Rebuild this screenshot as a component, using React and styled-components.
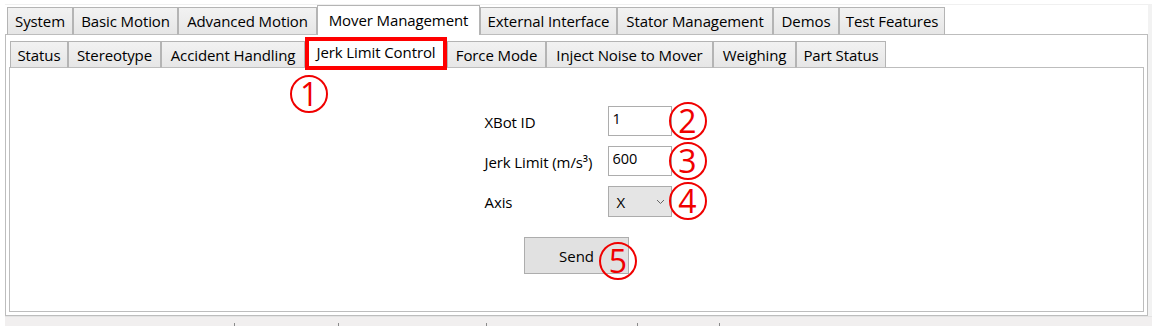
import React from 'react';
import styled, { createGlobalStyle } from 'styled-components';

const GlobalStyle = createGlobalStyle`
  html, body {
    margin: 0;
    padding: 0;
    background: #ffffff;
  }
  body {
    font-family: "Open Sans", "Noto Sans", "Liberation Sans", sans-serif;
    color: #000000;
  }
`;

const outerTabs = [
  { label: 'System', width: 66 },
  { label: 'Basic Motion', width: 105 },
  { label: 'Advanced Motion', width: 139 },
  { label: 'Mover Management', width: 163, active: true },
  { label: 'External Interface', width: 137 },
  { label: 'Stator Management', width: 156 },
  { label: 'Demos', width: 66 },
  { label: 'Test Features', width: 106 },
];

const innerTabs = [
  { label: 'Status', width: 58 },
  { label: 'Stereotype', width: 93 },
  { label: 'Accident Handling', width: 144 },
  { label: 'Jerk Limit Control', width: 142, active: true },
  { label: 'Force Mode', width: 99 },
  { label: 'Inject Noise to Mover', width: 167 },
  { label: 'Weighing', width: 83 },
  { label: 'Part Status', width: 90 },
];

const bottomTicks = [229, 333, 481, 632, 714];

const Page = styled.div`
  width: 1158px;
  height: 326px;
  overflow: hidden;
  padding: 4px 0 0 5px;
  box-sizing: border-box;
  background: #ffffff;
`;

const Shell = styled.div`
  width: 1147px;
  box-sizing: border-box;
  border-top: 1px solid #f0f0f0;
  border-right: 4px solid #f2f2f2;
`;

const TabStrip = styled.div`
  display: flex;
  align-items: flex-end;
  height: ${(p) => p.$height}px;
  padding-left: ${(p) => p.$indent}px;
  margin-bottom: -1px;
  position: relative;
  z-index: 1;
`;

const Tab = styled.div`
  position: relative;
  box-sizing: border-box;
  width: ${(p) => p.$width}px;
  height: ${(p) => (p.$active ? p.$tall : p.$short)}px;
  display: flex;
  align-items: center;
  justify-content: center;
  padding-bottom: ${(p) => (p.$active ? 2 : 0)}px;
  font-size: 15px;
  letter-spacing: -0.1px;
  white-space: nowrap;
  border: 1px solid #b4b4b4;
  border-bottom: ${(p) => (p.$active ? 'none' : '1px solid #bdbdbd')};
  background: ${(p) =>
    p.$active ? '#ffffff' : 'linear-gradient(#f2f2f2, #e6e6e6)'};
  color: #000000;
`;

const Panel = styled.div`
  box-sizing: border-box;
  height: ${(p) => p.$height}px;
  border: 1px solid #bdbdbd;
  padding: ${(p) => p.$pad};
  background: #ffffff;
  display: flex;
  flex-direction: column;
`;

const Content = styled.div`
  display: flex;
  flex-direction: column;
  align-items: center;
  padding-top: 38px;
`;

const Form = styled.div`
  display: grid;
  grid-template-columns: 123px 64px;
  grid-auto-rows: 30px;
  row-gap: 10px;
  align-items: center;
  margin-left: 3px;
`;

const Label = styled.span`
  font-size: 15px;
  letter-spacing: -0.1px;
  padding-top: 2px;
`;

const Field = styled.div`
  position: relative;
  height: 30px;
`;

const TextBox = styled.input`
  box-sizing: border-box;
  width: 64px;
  height: 30px;
  margin: 0;
  padding: 0 0 6px 4px;
  border: 1px solid #adadad;
  font-family: inherit;
  font-size: 14.5px;
  color: #000000;
  background: #ffffff;
  outline: none;
`;

const Combo = styled.div`
  box-sizing: border-box;
  width: 64px;
  height: 31px;
  display: flex;
  align-items: center;
  justify-content: space-between;
  padding: 0 6px 0 8px;
  border: 1px solid #acacac;
  background: #e5e5e5;
  font-size: 15px;
`;

const Button = styled.div`
  position: relative;
  box-sizing: border-box;
  width: 105px;
  height: 37px;
  margin-top: 21px;
  display: flex;
  align-items: center;
  justify-content: center;
  border: 1px solid #adadad;
  background: #e1e1e1;
  font-size: 15px;
`;

const Marker = styled.span`
  position: absolute;
  left: ${(p) => p.$left}px;
  top: ${(p) => p.$top}px;
  width: 38px;
  height: 38px;
  box-sizing: border-box;
  border: 2px solid #f00000;
  border-radius: 50%;
  display: flex;
  align-items: center;
  justify-content: center;
  color: #f00000;
  font-family: "Open Sans", "Noto Sans", sans-serif;
  font-size: 32px;
  line-height: 1;
  padding-bottom: 1px;
  z-index: 3;
`;

const Highlight = styled.span`
  position: absolute;
  left: -1px;
  top: -1px;
  right: -1px;
  bottom: -2px;
  border: 4px solid #ff0000;
  pointer-events: none;
`;

const BottomStrip = styled.div`
  position: relative;
  width: 1147px;
  height: 11px;
  border-top: 1px solid #e4e4e4;
  background: #f1efef;
`;

const Tick = styled.span`
  position: absolute;
  bottom: 0;
  left: ${(p) => p.$left}px;
  width: 1px;
  height: 5px;
  background: #8a8a8a;
`;

const Chevron = () => (
  <svg width="9" height="6" viewBox="0 0 9 6">
    <path d="M1 1l3.5 3.5L8 1" fill="none" stroke="#666" strokeWidth="1" />
  </svg>
);

const FormRow = ({ label, marker, children }) => (
  <>
    <Label>{label}</Label>
    <Field>
      {children}
      <Marker $left={61} $top={-4}>{marker}</Marker>
    </Field>
  </>
);

export default function App() {
  return (
    <>
      <GlobalStyle />
      <Page>
        <Shell>
          <TabStrip $height={30} $indent={2}>
            {outerTabs.map((t) => (
              <Tab
                key={t.label}
                $width={t.width}
                $active={t.active}
                $tall={30}
                $short={28}
              >
                {t.label}
              </Tab>
            ))}
          </TabStrip>
          <Panel $height={282} $pad="2px 3px 3px 3px">
            <TabStrip $height={31} $indent={1}>
              {innerTabs.map((t) => (
                <Tab
                  key={t.label}
                  $width={t.width}
                  $active={t.active}
                  $tall={31}
                  $short={27}
                >
                  {t.label}
                  {t.active && (
                    <>
                      <Highlight />
                      <Marker $left={-16} $top={37}>1</Marker>
                    </>
                  )}
                </Tab>
              ))}
            </TabStrip>
            <Panel $height={245} $pad="0">
              <Content>
                <Form>
                  <FormRow label="XBot ID" marker="2">
                    <TextBox readOnly value="1" />
                  </FormRow>
                  <FormRow label="Jerk Limit (m/s³)" marker="3">
                    <TextBox readOnly value="600" />
                  </FormRow>
                  <FormRow label="Axis" marker="4">
                    <Combo>
                      <span>X</span>
                      <Chevron />
                    </Combo>
                  </FormRow>
                </Form>
                <Button>
                  Send
                  <Marker $left={74} $top={4}>5</Marker>
                </Button>
              </Content>
            </Panel>
          </Panel>
        </Shell>
        <BottomStrip>
          {bottomTicks.map((x) => (
            <Tick key={x} $left={x} />
          ))}
        </BottomStrip>
      </Page>
    </>
  );
}
